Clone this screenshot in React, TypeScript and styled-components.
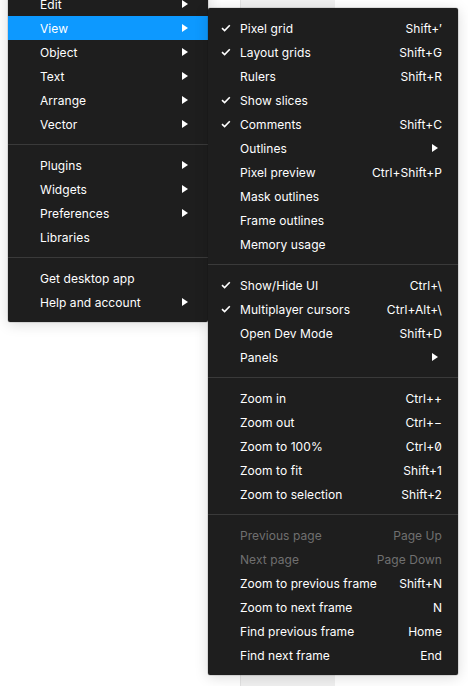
import React from "react";
import styled, { createGlobalStyle } from "styled-components";

const GlobalStyle = createGlobalStyle`
  html, body {
    margin: 0;
    padding: 0;
    background: #ffffff;
    overflow: hidden;
  }
  body {
    font-family: "Inter", "Noto Sans", sans-serif;
  }
`;

const Canvas = styled.div`
  position: relative;
  width: 468px;
  height: 686px;
  background: #ffffff;
  overflow: hidden;
`;

const Strip = styled.div`
  margin-left: 240px;
  width: 94px;
  height: 100%;
  background: #f0f0f0;
  border-left: 1px solid #e2e2e2;
`;

const Menu = styled.div<{ $left: number; $top: number; $width: number }>`
  position: absolute;
  left: ${(p) => p.$left}px;
  top: ${(p) => p.$top}px;
  width: ${(p) => p.$width}px;
  box-sizing: border-box;
  padding: 8px 0;
  background: #1e1e1e;
  border-radius: 2px;
  box-shadow: 0 2px 14px rgba(0, 0, 0, 0.15), 0 0 0 0.5px rgba(0, 0, 0, 0.2);
  display: flex;
  flex-direction: column;
`;

const Row = styled.div<{ $active?: boolean; $disabled?: boolean }>`
  height: 24px;
  display: flex;
  align-items: center;
  padding: 0 16px 0 0;
  font-size: 12px;
  letter-spacing: 0.005em;
  color: ${(p) => (p.$disabled ? "#707070" : "#ffffff")};
  background: ${(p) => (p.$active ? "#0d99ff" : "transparent")};
`;

const CheckSlot = styled.div`
  width: 32px;
  display: flex;
  justify-content: flex-end;
  padding-right: 9px;
  box-sizing: border-box;
`;

const Label = styled.span`
  flex: 1;
  white-space: nowrap;
`;

const Shortcut = styled.span`
  white-space: nowrap;
  font-feature-settings: "zero" 1;
`;

const ArrowWrap = styled.span`
  display: flex;
  margin-right: 4px;
`;

const Divider = styled.div`
  height: 1px;
  background: #3a3a3a;
  margin: 8px 0;
`;

const Check = () => (
  <svg width="10" height="8" viewBox="0 0 10 8">
    <path d="M1 4.2 L3.6 6.6 L8.8 1.2" fill="none" stroke="#fff" strokeWidth="1.6" />
  </svg>
);

const Arrow = () => (
  <ArrowWrap>
    <svg width="6" height="8" viewBox="0 0 6 8">
      <polygon points="0,0 6,4 0,8" fill="#fff" />
    </svg>
  </ArrowWrap>
);

type Item = {
  label: string;
  check?: boolean;
  shortcut?: string;
  sub?: boolean;
  active?: boolean;
  disabled?: boolean;
};

type Group = Item[];

const mainGroups: Group[] = [
  [
    { label: "Edit", sub: true },
    { label: "View", sub: true, active: true },
    { label: "Object", sub: true },
    { label: "Text", sub: true },
    { label: "Arrange", sub: true },
    { label: "Vector", sub: true },
  ],
  [
    { label: "Plugins", sub: true },
    { label: "Widgets", sub: true },
    { label: "Preferences", sub: true },
    { label: "Libraries" },
  ],
  [{ label: "Get desktop app" }, { label: "Help and account", sub: true }],
];

const viewGroups: Group[] = [
  [
    { label: "Pixel grid", check: true, shortcut: "Shift+\u2032" },
    { label: "Layout grids", check: true, shortcut: "Shift+G" },
    { label: "Rulers", shortcut: "Shift+R" },
    { label: "Show slices", check: true },
    { label: "Comments", check: true, shortcut: "Shift+C" },
    { label: "Outlines", sub: true },
    { label: "Pixel preview", shortcut: "Ctrl+Shift+P" },
    { label: "Mask outlines" },
    { label: "Frame outlines" },
    { label: "Memory usage" },
  ],
  [
    { label: "Show/Hide UI", check: true, shortcut: "Ctrl+\\" },
    { label: "Multiplayer cursors", check: true, shortcut: "Ctrl+Alt+\\" },
    { label: "Open Dev Mode", shortcut: "Shift+D" },
    { label: "Panels", sub: true },
  ],
  [
    { label: "Zoom in", shortcut: "Ctrl++" },
    { label: "Zoom out", shortcut: "Ctrl+\u2212" },
    { label: "Zoom to 100%", shortcut: "Ctrl+0" },
    { label: "Zoom to fit", shortcut: "Shift+1" },
    { label: "Zoom to selection", shortcut: "Shift+2" },
  ],
  [
    { label: "Previous page", shortcut: "Page Up", disabled: true },
    { label: "Next page", shortcut: "Page Down", disabled: true },
    { label: "Zoom to previous frame", shortcut: "Shift+N" },
    { label: "Zoom to next frame", shortcut: "N" },
    { label: "Find previous frame", shortcut: "Home" },
    { label: "Find next frame", shortcut: "End" },
  ],
];

const MenuList: React.FC<{ groups: Group[] }> = ({ groups }) => (
  <>
    {groups.map((g, gi) => (
      <React.Fragment key={gi}>
        {gi > 0 && <Divider />}
        {g.map((it) => (
          <Row key={it.label} $active={it.active} $disabled={it.disabled}>
            <CheckSlot>{it.check && <Check />}</CheckSlot>
            <Label>{it.label}</Label>
            {it.shortcut && <Shortcut>{it.shortcut}</Shortcut>}
            {it.sub && <Arrow />}
          </Row>
        ))}
      </React.Fragment>
    ))}
  </>
);

export default function App() {
  return (
    <>
      <GlobalStyle />
      <Canvas>
        <Strip />
        <Menu $left={8} $top={-16} $width={200}>
          <MenuList groups={mainGroups} />
        </Menu>
        <Menu $left={208} $top={8} $width={250}>
          <MenuList groups={viewGroups} />
        </Menu>
      </Canvas>
    </>
  );
}
